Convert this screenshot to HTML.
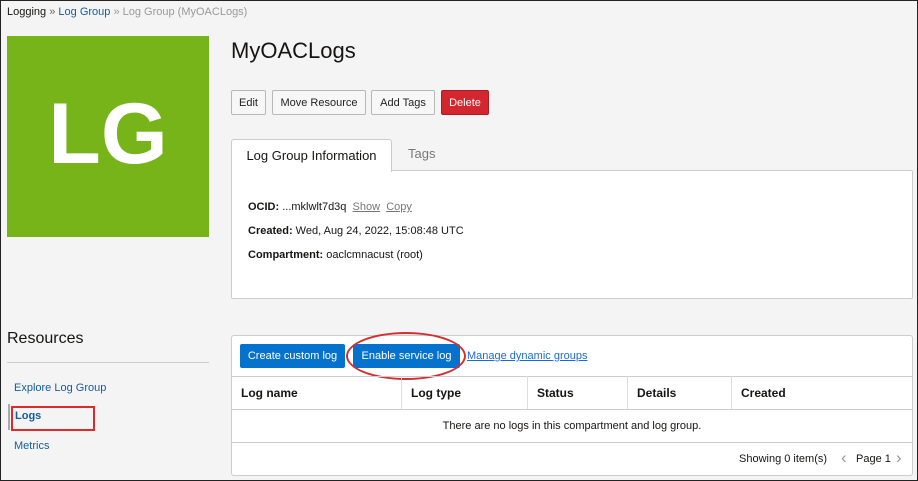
<!DOCTYPE html><html><head><style>
*{margin:0;padding:0;box-sizing:border-box}
body{width:918px;height:481px;background:#f4f4f4;font-family:"Liberation Sans",sans-serif;position:relative;overflow:hidden;color:#161513}
.a{position:absolute}
.btn{position:absolute;top:90px;height:25px;border:1px solid #b8b8b8;border-radius:2px;background:#f7f7f7;font-size:11px;display:flex;align-items:center;justify-content:center;color:#222}
.bb{position:absolute;top:344px;height:24px;background:#0572ce;color:#fff;font-size:11px;display:flex;align-items:center;justify-content:center;border-radius:2px}
.th{position:absolute;top:376px;height:34px;border-left:1px solid #ddd;font-size:12px;font-weight:bold;line-height:34px;padding-left:9px}
</style></head><body>
<div class="a" style="left:7px;top:6px;font-size:11px"><span style="color:#161513">Logging</span> <span style="color:#666">»</span> <span style="color:#145c9e">Log Group</span> <span style="color:#999">» Log Group (MyOACLogs)</span></div>
<div class="a" style="left:7px;top:36px;width:202px;height:201px;background:#77b41a;color:#fff;font-weight:bold;font-size:86px;line-height:196px;text-align:center">LG</div>
<div class="a" style="left:231px;top:38px;font-size:22px">MyOACLogs</div>
<div class="btn" style="left:231px;width:35px">Edit</div>
<div class="btn" style="left:272px;width:94px">Move Resource</div>
<div class="btn" style="left:371px;width:64px">Add Tags</div>
<div class="btn" style="left:441px;width:48px;background:#d3262e;border-color:#b01c23;color:#fff">Delete</div>
<div class="a" style="left:231px;top:170px;width:682px;height:129px;background:#fff;border:1px solid #ccc;border-radius:2px"></div>
<div class="a" style="left:231px;top:139px;width:161px;height:33px;background:#fff;border:1px solid #ccc;border-bottom:none;border-radius:3px 3px 0 0;font-size:13px;line-height:31px;text-align:center">Log Group Information</div>
<div class="a" style="left:408px;top:146px;font-size:13px;color:#777">Tags</div>
<div class="a" style="left:248px;top:201px;font-size:11px"><b>OCID:</b> ...mklwlt7d3q &nbsp;<span style="color:#777;text-decoration:underline">Show</span> &nbsp;<span style="color:#777;text-decoration:underline">Copy</span></div>
<div class="a" style="left:248px;top:225px;font-size:11px"><b>Created:</b> Wed, Aug 24, 2022, 15:08:48 UTC</div>
<div class="a" style="left:248px;top:249px;font-size:11px"><b>Compartment:</b> oaclcmnacust (root)</div>
<div class="a" style="left:7px;top:330px;font-size:16px">Resources</div>
<div class="a" style="left:7px;top:362px;width:202px;height:1px;background:#ccc"></div>
<div class="a" style="left:14px;top:382px;font-size:11px;color:#145c9e">Explore Log Group</div>
<div class="a" style="left:8px;top:404px;width:2px;height:26px;background:#aaa"></div>
<div class="a" style="left:11px;top:406px;width:84px;height:25px;border:2px solid #e02a2a"></div>
<div class="a" style="left:15px;top:410px;font-size:11px;color:#145c9e;font-weight:bold">Logs</div>
<div class="a" style="left:14px;top:440px;font-size:11px;color:#145c9e">Metrics</div>
<div class="a" style="left:231px;top:335px;width:682px;height:141px;background:#fff;border:1px solid #ccc;border-radius:3px"></div>
<div class="bb" style="left:240px;width:105px">Create custom log</div>
<div class="bb" style="left:353px;width:107px">Enable service log</div>
<div class="a" style="left:346px;top:332px;width:120px;height:48px;border:2px solid #d23030;border-radius:50%"></div>
<div class="a" style="left:467px;top:350px;font-size:11px;color:#1a6bd6;text-decoration:underline">Manage dynamic groups</div>
<div class="a" style="left:232px;top:376px;width:680px;height:1px;background:#ccc"></div>
<div class="th" style="left:232px;border:none">Log name</div>
<div class="th" style="left:401px">Log type</div>
<div class="th" style="left:527px">Status</div>
<div class="th" style="left:627px">Details</div>
<div class="th" style="left:731px">Created</div>
<div class="a" style="left:232px;top:409px;width:680px;height:1px;background:#ccc"></div>
<div class="a" style="left:232px;top:420px;width:680px;text-align:center;font-size:11px">There are no logs in this compartment and log group.</div>
<div class="a" style="left:232px;top:442px;width:680px;height:1px;background:#ccc"></div>
<div class="a" style="left:739px;top:453px;font-size:11px">Showing 0 item(s)</div>
<div class="a" style="left:841px;top:448px;font-size:17px;color:#999">&#x2039;</div>
<div class="a" style="left:856px;top:453px;font-size:11px">Page 1</div>
<div class="a" style="left:896px;top:448px;font-size:17px;color:#999">&#x203A;</div>
<div class="a" style="left:0;top:0;width:918px;height:481px;border:1px solid #222"></div>
</body></html>
